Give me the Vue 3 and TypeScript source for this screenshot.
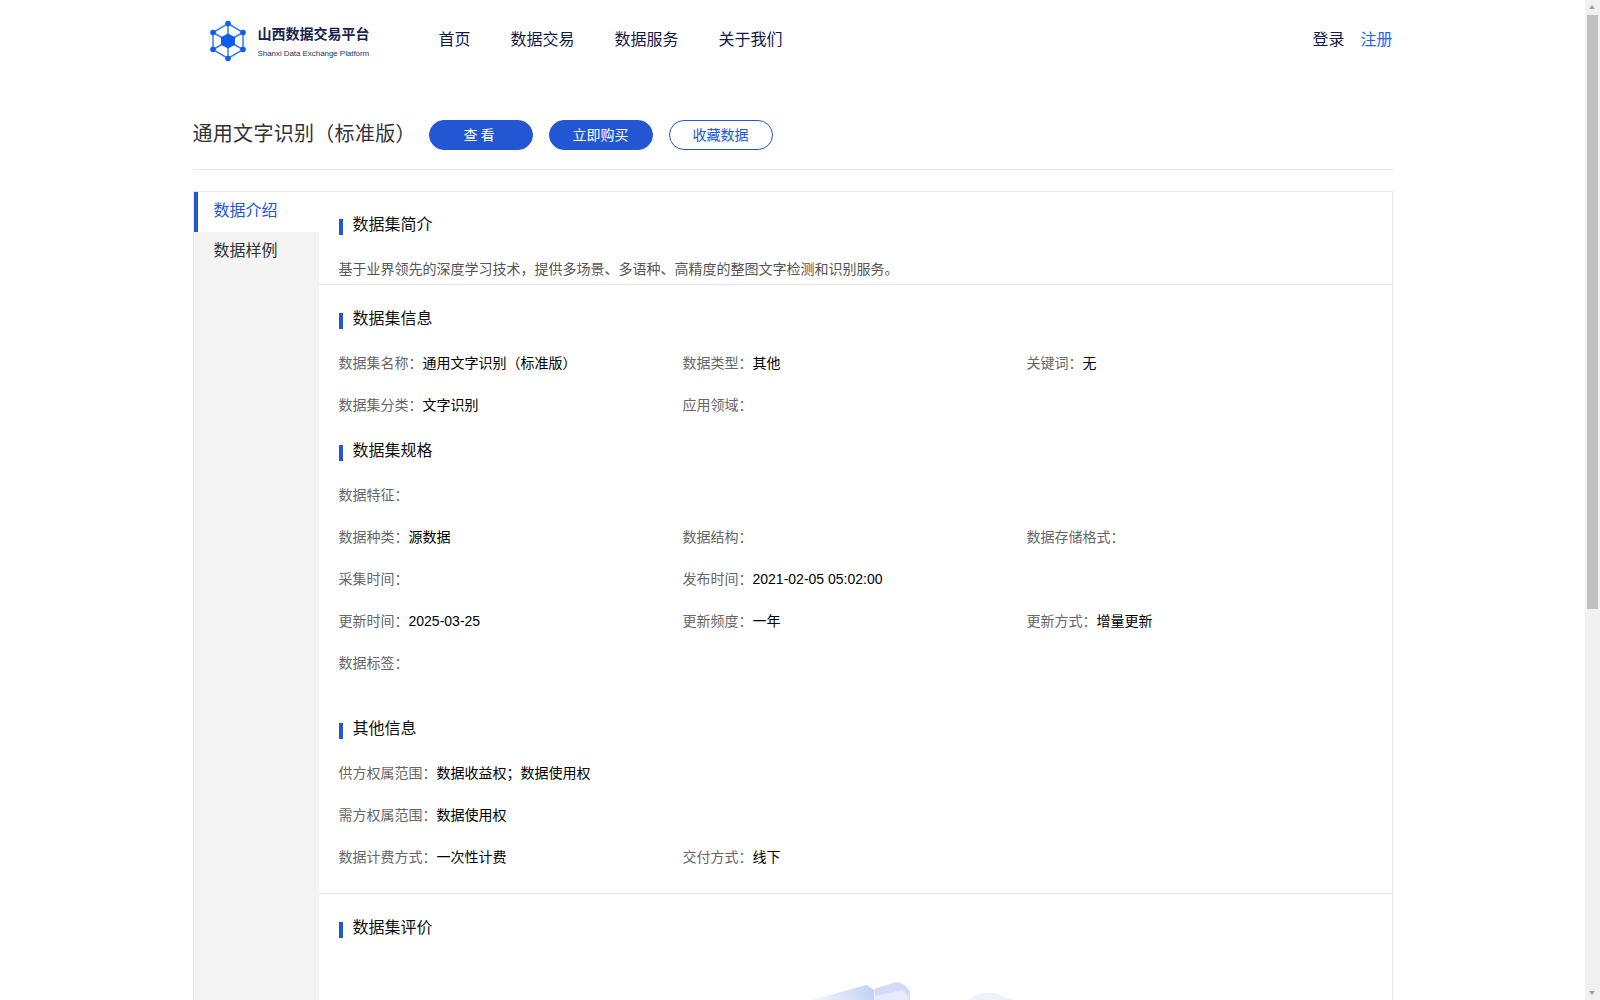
<script setup lang="ts">
import { ref } from 'vue'

interface Field {
  label: string
  value?: string
  full?: boolean
  wide?: boolean
}

const navItems = ['首页', '数据交易', '数据服务', '关于我们']
const sideItems = ['数据介绍', '数据样例']
const activeSide = ref(0)

const infoFields: Field[] = [
  { label: '数据集名称', value: '通用文字识别（标准版）' },
  { label: '数据类型', value: '其他' },
  { label: '关键词', value: '无' },
  { label: '数据集分类', value: '文字识别' },
  { label: '应用领域' },
]

const specFields: Field[] = [
  { label: '数据特征', full: true },
  { label: '数据种类', value: '源数据' },
  { label: '数据结构' },
  { label: '数据存储格式' },
  { label: '采集时间' },
  { label: '发布时间', value: '2021-02-05 05:02:00', wide: true },
  { label: '更新时间', value: '2025-03-25' },
  { label: '更新频度', value: '一年' },
  { label: '更新方式', value: '增量更新' },
  { label: '数据标签', full: true },
]

const otherFields: Field[] = [
  { label: '供方权属范围', value: '数据收益权；数据使用权', full: true },
  { label: '需方权属范围', value: '数据使用权', full: true },
  { label: '数据计费方式', value: '一次性计费' },
  { label: '交付方式', value: '线下' },
]
</script>

<template>
  <div class="viewport">
    <div class="page">
      <header class="header">
        <div class="logo">
          <svg class="logo-mark" viewBox="0 0 40 42" width="40" height="42">
            <g fill="none" stroke="#3a7af7" stroke-width="1.500">
              <path d="M20 3.500 L35 12.500 L35 29.500 L20 38.500 L5 29.500 L5 12.500 Z" />
              <path d="M20 3.500 L20 38.500 M5 12.500 L35 29.500 M35 12.500 L5 29.500" />
            </g>
            <path d="M20 13.500 L27 17.200 L27 24.800 L20 28.500 L13 24.800 L13 17.200 Z" fill="#0f5cf2" />
            <g fill="#0f5cf2">
              <circle cx="20" cy="3.500" r="2.800" />
              <circle cx="35" cy="12.500" r="2.800" />
              <circle cx="35" cy="29.500" r="2.800" />
              <circle cx="20" cy="38.500" r="2.800" />
              <circle cx="5" cy="29.500" r="2.800" />
              <circle cx="5" cy="12.500" r="2.800" />
            </g>
          </svg>
          <div class="logo-text">
            <div class="logo-cn">山西数据交易平台</div>
            <div class="logo-en">Shanxi Data Exchange Platform</div>
          </div>
        </div>
        <nav class="nav">
          <a v-for="item in navItems" :key="item" class="nav-item">{{ item }}</a>
        </nav>
        <div class="auth">
          <a class="login">登录</a>
          <a class="register">注册</a>
        </div>
      </header>

      <div class="title-bar">
        <h1 class="title">通用文字识别（标准版）</h1>
        <button class="btn primary view">查看</button>
        <button class="btn primary">立即购买</button>
        <button class="btn outline">收藏数据</button>
      </div>

      <div class="detail">
        <aside class="side">
          <div
            v-for="(item, i) in sideItems"
            :key="item"
            class="side-item"
            :class="{ active: activeSide === i }"
            @click="activeSide = i"
          >
            {{ item }}
          </div>
        </aside>

        <main class="content">
          <section class="block intro">
            <h2 class="block-title">数据集简介</h2>
            <p class="desc">基于业界领先的深度学习技术，提供多场景、多语种、高精度的整图文字检测和识别服务。</p>
          </section>

          <section class="block info">
            <h2 class="block-title">数据集信息</h2>
            <div class="fields">
              <div v-for="f in infoFields" :key="f.label" class="field" :class="{ full: f.full }">
                <span class="label">{{ f.label }}：</span><span class="value">{{ f.value }}</span>
              </div>
            </div>

            <h2 class="block-title spec-title">数据集规格</h2>
            <div class="fields">
              <div v-for="f in specFields" :key="f.label" class="field" :class="{ full: f.full, wide: f.wide }">
                <span class="label">{{ f.label }}：</span><span class="value">{{ f.value }}</span>
              </div>
            </div>

            <h2 class="block-title other-title">其他信息</h2>
            <div class="fields">
              <div v-for="f in otherFields" :key="f.label" class="field" :class="{ full: f.full }">
                <span class="label">{{ f.label }}：</span><span class="value">{{ f.value }}</span>
              </div>
            </div>
          </section>

          <section class="block review">
            <h2 class="block-title">数据集评价</h2>
            <svg class="empty" viewBox="0 0 240 120" width="240" height="120">
              <defs>
                <linearGradient id="tube" x1="0" y1="0.600" x2="1" y2="0.300">
                  <stop offset="0" stop-color="#ffffff" />
                  <stop offset="1" stop-color="#c4d2f5" />
                </linearGradient>
              </defs>
              <path d="M8 21 L66 5 L74 10 L76 60 L8 80 Z" fill="url(#tube)" />
              <path d="M74 9 L96 2 Q106 3 110 12 L110 22 L76 22 Z" fill="#d0dcf8" />
              <path d="M76 16 L102 10 Q110 14 110 24 L110 60 L76 60 Z" fill="#e6ecfc" />
              <path d="M160 40 Q164 14 186 13 Q198 12 206 18 Q222 18 228 40 Z" fill="#eef2fd" />
            </svg>
          </section>
        </main>
      </div>
    </div>

    <div class="scrollbar">
      <span class="arrow up"></span>
      <div class="thumb"></div>
      <span class="arrow down"></span>
    </div>
  </div>
</template>

<style>
html,
body {
  margin: 0;
  background: #fff;
}
</style>

<style scoped>
.viewport {
  padding-right: 15px;
  font-family: "Liberation Sans", "Noto Sans CJK SC", sans-serif;
}

.page {
  width: 1200px;
  margin: 0 auto;
  padding-bottom: 130px;
}

.header {
  display: flex;
  align-items: center;
  height: 76px;
}

.logo {
  display: flex;
  align-items: center;
  gap: 10px;
  width: 246px;
  padding-left: 15px;
  margin-top: 8px;
  box-sizing: border-box;
}

.logo-mark {
  margin-bottom: 3px;
  flex-shrink: 0;
}

.logo-cn {
  font-size: 14px;
  font-weight: 700;
  color: #14234f;
  line-height: 20px;
}

.logo-en {
  font-size: 8px;
  letter-spacing: -0.060px;
  color: #24345f;
  line-height: 12px;
  margin-top: 4px;
  white-space: nowrap;
}

.nav {
  display: flex;
  gap: 40px;
}

.nav-item {
  font-size: 16px;
  color: #101a4a;
}

.auth {
  margin-left: auto;
  display: flex;
  gap: 16px;
  font-size: 16px;
}

.login {
  color: #101a4a;
}

.register {
  color: #1f66f0;
}

.title-bar {
  display: flex;
  align-items: center;
  padding: 44px 0 19px;
  border-bottom: 1px solid #e6e6e6;
  gap: 16px;
}

.title {
  margin: 0 0 2px 0;
  font-size: 20px;
  line-height: 28px;
  font-weight: 400;
  letter-spacing: 0.300px;
  color: #333;
  width: 220px;
  white-space: nowrap;
}

.btn {
  width: 104px;
  height: 30px;
  border-radius: 15px;
  font-family: inherit;
  font-size: 14px;
  padding: 0 0 2px;
  box-sizing: border-box;
}

.primary {
  background: #2356d2;
  border: 1px solid #2356d2;
  color: #fff;
}

.view {
  letter-spacing: 3px;
}

.outline {
  background: #fff;
  border: 1px solid #2356d2;
  color: #2356d2;
}

.detail {
  display: flex;
  margin-top: 21px;
  border: 1px solid #e6e6e6;
  border-bottom: none;
}

.side {
  width: 125px;
  flex-shrink: 0;
  background: #f4f4f4;
}

.side-item {
  height: 40px;
  line-height: 38px;
  padding-left: 20px;
  font-size: 16px;
  color: #333;
  cursor: pointer;
}

.side-item.active {
  background: #fff;
  color: #2356d2;
  border-left: 4px solid #2356d2;
  padding-left: 16px;
}

.content {
  flex: 1;
  min-width: 0;
}

.block {
  padding: 0 20px;
  border-bottom: 1px solid #e6e6e6;
}

.block:last-child {
  border-bottom: none;
}

.block-title {
  margin: 0;
  font-size: 16px;
  font-weight: 400;
  color: #111;
  line-height: 22px;
  display: flex;
  align-items: center;
  gap: 10px;
}

.block-title::before {
  content: '';
  width: 4px;
  height: 16px;
  margin-top: 3px;
  background: #2356d2;
}

.intro {
  padding-top: 22px;
  height: 93px;
  box-sizing: border-box;
}

.desc {
  margin: 22px 0 0;
  font-size: 14px;
  line-height: 22px;
  color: #555;
}

.info {
  padding-top: 23px;
  padding-bottom: 15px;
}

.fields {
  display: flex;
  flex-wrap: wrap;
  margin-top: 12px;
}

.field {
  width: 344px;
  height: 42px;
  line-height: 42px;
  font-size: 14px;
  white-space: nowrap;
}

.field.full {
  width: 100%;
}

.field.wide {
  width: 688px;
}

.label {
  color: #666;
}

.value {
  color: #000;
}

.spec-title {
  margin-top: 14px;
}

.other-title {
  margin-top: 34px;
}

.review {
  padding-top: 23px;
  height: 610px;
  box-sizing: border-box;
}

.empty {
  display: block;
  margin: 41px 0 0 461px;
}

/* the page's own bar, drawn because the browser hides it */
.scrollbar {
  position: fixed;
  top: 0;
  right: 0;
  width: 15px;
  height: 100vh;
  background: #f1f1f1;
}

.thumb {
  position: absolute;
  top: 15px;
  left: 2px;
  width: 11px;
  height: 594px;
  background: #c1c1c1;
}

.arrow {
  position: absolute;
  left: 4px;
  width: 0;
  height: 0;
  border-left: 3.500px solid transparent;
  border-right: 3.500px solid transparent;
}

.arrow.up {
  top: 5px;
  border-bottom: 4px solid #a3a3a3;
}

.arrow.down {
  bottom: 5px;
  border-top: 4px solid #a3a3a3;
}
</style>
